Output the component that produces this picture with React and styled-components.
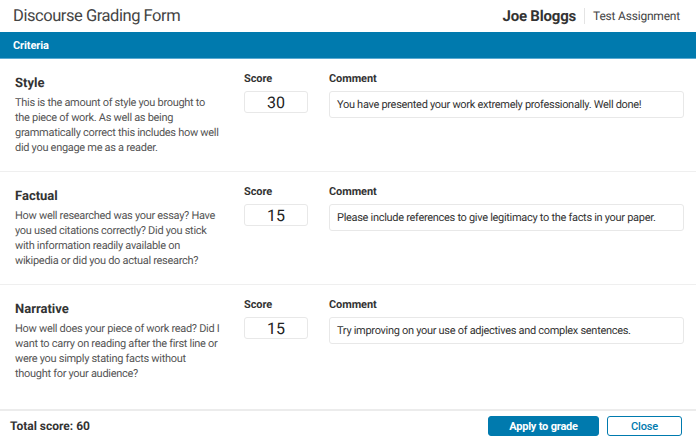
import React from "react";
import styled, { createGlobalStyle } from "styled-components";

const Global = createGlobalStyle`
  html, body { margin: 0; padding: 0; background: #fff; }
  body {
    font-family: Roboto, "Noto Sans", Arial, sans-serif;
    color: #333;
    text-rendering: geometricPrecision;
    -webkit-font-smoothing: antialiased;
  }
  * { box-sizing: border-box; }
`;

const Page = styled.div`
  width: 696px;
  height: 441px;
  display: flex;
  flex-direction: column;
  background: #fff;
  overflow: hidden;
`;

const Header = styled.header`
  height: 32px;
  display: flex;
  align-items: center;
  justify-content: space-between;
  padding: 0 16px 0 13px;
`;

const Title = styled.h1`
  margin: 0;
  font-size: 16.5px;
  font-weight: 400;
  color: #444;
  letter-spacing: -0.45px;
`;

const Meta = styled.div`
  display: flex;
  align-items: center;
`;

const Student = styled.span`
  font-size: 15px;
  font-weight: 700;
  color: #333;
  letter-spacing: -0.2px;
  padding-right: 8px;
  border-right: 1px solid #e4e4e4;
  line-height: 16px;
`;

const Assignment = styled.span`
  font-size: 12px;
  color: #444;
  letter-spacing: -0.2px;
  padding-left: 8px;
`;

const Bar = styled.div`
  height: 27px;
  background: #007aae;
  border-bottom: 1px solid #5aaad2;
  display: flex;
  align-items: center;
  padding: 0 13px;
  color: #fff;
  font-size: 11px;
  font-weight: 700;
  letter-spacing: -0.1px;
`;

const Rows = styled.div`
  flex: 1;
`;

const Row = styled.section`
  height: 113px;
  display: grid;
  grid-template-columns: 207px 64px 355px;
  column-gap: 22px;
  padding: 13px 12px 0 15px;
  border-bottom: ${(p) => (p.$last ? "none" : "1px solid #efefef")};
`;

const Criterion = styled.div`
  padding-top: 4px;
`;

const Name = styled.h2`
  margin: 0 0 3px;
  font-size: 13px;
  font-weight: 700;
  color: #333;
  line-height: 16px;
`;

const Desc = styled.p`
  margin: 0;
  font-size: 11px;
  line-height: 15px;
  color: #555;
  letter-spacing: -0.3px;
  white-space: nowrap;
`;

const Field = styled.div`
  display: flex;
  flex-direction: column;
  align-items: flex-start;
  margin-left: ${(p) => p.$shift || 0}px;
`;

const Label = styled.div`
  font-size: 11px;
  font-weight: 700;
  color: #333;
  line-height: 13px;
  letter-spacing: -0.1px;
  margin-bottom: 6px;
`;

const ScoreBox = styled.div`
  width: 64px;
  height: 22px;
  border: 1px solid #e8e8e8;
  border-radius: 3px;
  display: flex;
  align-items: center;
  justify-content: center;
  font-size: 16px;
  color: #222;
`;

const CommentBox = styled.div`
  width: 355px;
  height: 27px;
  border: 1px solid #e8e8e8;
  border-radius: 3px;
  display: flex;
  align-items: center;
  padding: 0 7px;
  font-size: 11px;
  color: #333;
  letter-spacing: -0.3px;
  white-space: nowrap;
`;

const Footer = styled.footer`
  height: 32px;
  border-top: 2px solid #ececec;
  display: flex;
  align-items: center;
  justify-content: space-between;
  padding: 0 14px 0 10px;
`;

const Total = styled.div`
  font-size: 12px;
  font-weight: 700;
  color: #333;
`;

const Buttons = styled.div`
  display: flex;
  gap: 8px;
`;

const Button = styled.button`
  height: 20px;
  width: ${(p) => p.$w}px;
  border-radius: 3px;
  border: 1px solid #007aae;
  background: ${(p) => (p.$primary ? "#007aae" : "#fff")};
  color: ${(p) => (p.$primary ? "#fff" : "#007aae")};
  font-family: inherit;
  font-size: 11px;
  font-weight: ${(p) => (p.$primary ? 700 : 500)};
  letter-spacing: -0.2px;
  padding: 0;
  cursor: pointer;
`;

const criteria = [
  {
    name: "Style",
    desc: [
      "This is the amount of style you brought to",
      "the piece of work. As well as being",
      "grammatically correct this includes how well",
      "did you engage me as a reader.",
    ],
    score: 30,
    comment: "You have presented your work extremely professionally. Well done!",
  },
  {
    name: "Factual",
    desc: [
      "How well researched was your essay? Have",
      "you used citations correctly? Did you stick",
      "with information readily available on",
      "wikipedia or did you do actual research?",
    ],
    score: 15,
    comment: "Please include references to give legitimacy to the facts in your paper.",
  },
  {
    name: "Narrative",
    desc: [
      "How well does your piece of work read? Did I",
      "want to carry on reading after the first line or",
      "were you simply stating facts without",
      "thought for your audience?",
    ],
    score: 15,
    comment: "Try improving on your use of adjectives and complex sentences.",
  },
];

export default function App() {
  return (
    <>
      <Global />
      <Page>
        <Header>
          <Title>Discourse Grading Form</Title>
          <Meta>
            <Student>Joe Bloggs</Student>
            <Assignment>Test Assignment</Assignment>
          </Meta>
        </Header>
        <Bar>Criteria</Bar>
        <Rows>
          {criteria.map((c, i) => (
            <Row key={c.name} $last={i === criteria.length - 1}>
              <Criterion>
                <Name>{c.name}</Name>
                <Desc>
                  {c.desc.map((line, j) => (
                    <React.Fragment key={j}>
                      {line}
                      {j < c.desc.length - 1 && " "}
                      {j < c.desc.length - 1 && <br />}
                    </React.Fragment>
                  ))}
                </Desc>
              </Criterion>
              <Field>
                <Label>Score</Label>
                <ScoreBox>{c.score}</ScoreBox>
              </Field>
              <Field $shift={-1}>
                <Label>Comment</Label>
                <CommentBox>{c.comment}</CommentBox>
              </Field>
            </Row>
          ))}
        </Rows>
        <Footer>
          <Total>Total score: 60</Total>
          <Buttons>
            <Button $primary $w={111}>Apply to grade</Button>
            <Button $w={75}>Close</Button>
          </Buttons>
        </Footer>
      </Page>
    </>
  );
}
